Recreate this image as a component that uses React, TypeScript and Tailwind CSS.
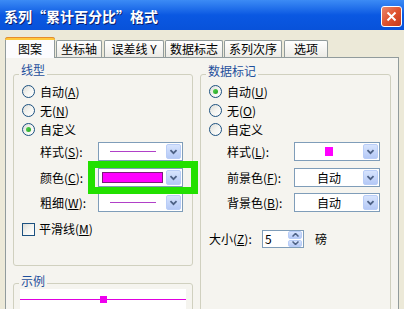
import React from "react";

const Chevron = () => (
  <svg width="15" height="15" viewBox="0 0 15 15">
    <path d="M4 6 L7.5 9.5 L11 6" fill="none" stroke="#4D6185" strokeWidth="2" />
  </svg>
);

const DropBtn = () => (
  <div className="w-[15px] h-[15px] mr-[1px] rounded-[2px] border border-[#B9CDF7] bg-gradient-to-b from-[#D7E4FD] to-[#B5C9F6] flex items-center justify-center">
    <Chevron />
  </div>
);

const Combo = ({ w, children, h = 19 }: { w: number; h?: number; children?: React.ReactNode }) => (
  <div
    className="border border-[#7F9DB9] bg-white flex items-center"
    style={{ width: w, height: h }}
  >
    <div className="flex-1 flex items-center justify-center h-full">{children}</div>
    <DropBtn />
  </div>
);

const Radio = ({ checked }: { checked?: boolean }) => (
  <div className="w-[13px] h-[13px] rounded-full border border-[#1C5180] bg-gradient-to-br from-[#DCDCD7] via-[#F4F4F0] to-white flex items-center justify-center shrink-0">
    {checked && <div className="w-[5px] h-[5px] rounded-full bg-gradient-to-br from-[#55D551] to-[#21A121]" />}
  </div>
);

const RadioRow = ({ checked, label, k }: { checked?: boolean; label: string; k?: string }) => (
  <div className="h-[19px] flex items-center gap-[5px]">
    <Radio checked={checked} />
    <span>
      {label}
      {k && (
        <>
          (<u>{k}</u>)
        </>
      )}
    </span>
  </div>
);

const Label = ({ text, k, w }: { text: string; k: string; w: number }) => (
  <span className="shrink-0" style={{ width: w }}>
    {text}(<u>{k}</u>):
  </span>
);

const Group = ({
  title,
  className,
  children,
  top = 11,
}: {
  title: string;
  className: string;
  children?: React.ReactNode;
  top?: number;
}) => (
  <div className={"relative shrink-0 border border-[#D0D0BF] rounded-[3px] " + className}>
    <span
      className="absolute left-[5px] px-[2px] bg-[#F5F4EF] text-[#1F4F9C] leading-[14px]"
      style={{ top: -top }}
    >
      {title}
    </span>
    {children}
  </div>
);

const Tab = ({ label, w, ml, active }: { label: string; w: number; ml: number; active?: boolean }) =>
  active ? (
    <div
      className="relative z-10 h-[21px] mb-[-1px] border border-b-0 border-[#919B9C] rounded-t-[3px] bg-[#FCFCFE] flex items-center justify-center"
      style={{ width: w, marginLeft: ml }}
    >
      <div className="absolute -top-px -left-px -right-px h-[3px] rounded-t-[3px] bg-[#FFC83C] border-t border-[#E68B2C]" />
      <span className="mt-[1px]">{label}</span>
    </div>
  ) : (
    <div
      className="h-[17px] border border-b-0 border-[#919B9C] rounded-t-[2px] bg-gradient-to-b from-white to-[#ECEBE6] flex items-center justify-center"
      style={{ width: w, marginLeft: ml }}
    >
      {label}
    </div>
  );

export default function App() {
  return (
    <div className="w-[404px] h-[309px] bg-[#ECE9D8] overflow-hidden text-[12px] leading-[14px] text-black font-['Noto_Sans_CJK_SC','Noto_Sans',sans-serif]">
      {/* title bar */}
      <div className="h-[30px] bg-gradient-to-b from-[#3C8BF5] via-[#0A58E2] to-[#0852DA] flex items-center pl-[4px] pr-[2px]">
        <span className="text-white font-bold text-[14px] leading-[16px] [text-shadow:1px_1px_0_#0A1F6E] mt-[2px]">
          系列“累计百分比”格式
        </span>
        <div className="ml-auto w-[21px] h-[21px] rounded-[3px] border border-white bg-gradient-to-br from-[#E9866A] via-[#E0532E] to-[#C4391C] flex items-center justify-center mt-[2px]">
          <svg width="13" height="13" viewBox="0 0 13 13">
            <path d="M2.5 2.5 L10.5 10.5 M10.5 2.5 L2.5 10.5" stroke="white" strokeWidth="2" />
          </svg>
        </div>
      </div>

      {/* tabs */}
      <div className="h-[27px] flex items-end pl-[5px]">
        <Tab label="图案" w={50} ml={0} active />
        <Tab label="坐标轴" w={46} ml={1} />
        <Tab label="误差线 Y" w={60} ml={2} />
        <Tab label="数据标志" w={58} ml={1} />
        <Tab label="系列次序" w={58} ml={1} />
        <Tab label="选项" w={44} ml={2} />
      </div>

      {/* panel */}
      <div className="ml-[5px] w-[394px] h-[260px] border border-[#919B9C] bg-[#F5F4EF] flex pl-[7px]">
        {/* left column */}
        <div className="w-[180px] flex flex-col">
          <Group title="线型" className="mt-[16px] h-[192px] pl-[8px] pt-[7px]" top={12}>
            <RadioRow label="自动" k="A" />
            <RadioRow label="无" k="N" />
            <RadioRow label="自定义" checked />
            <div className="pl-[18px] flex flex-col">
              <div className="mt-[3px] h-[19px] flex items-center">
                <Label text="样式" k="S" w={58} />
                <Combo w={85}>
                  <div className="w-[46px] h-px bg-[#B040C8]" />
                </Combo>
              </div>
              <div className="relative mt-[7px] h-[19px] flex items-center">
                <Label text="颜色" k="C" w={58} />
                <Combo w={85}>
                  <div className="w-full h-full flex items-center pl-[3px]">
                    <div className="w-[61px] h-[11px] bg-[#FF00FF] border border-[#7A1A7A]" />
                  </div>
                </Combo>
                <div className="absolute left-[48px] -top-[7px] w-[110px] h-[33px] border-[7px] border-[#22E000]" />
              </div>
              <div className="mt-[6px] h-[19px] flex items-center">
                <Label text="粗细" k="W" w={58} />
                <Combo w={85}>
                  <div className="w-[46px] h-px bg-[#B040C8]" />
                </Combo>
              </div>
            </div>
            <div className="mt-[10px] h-[14px] flex items-center gap-[4px]">
              <div className="w-[13px] h-[13px] border border-[#1C5180] bg-gradient-to-br from-[#DCDCD7] via-[#F4F4F0] to-white" />
              <span>
                平滑线(<u>M</u>)
              </span>
            </div>
          </Group>
          <Group title="示例" className="mt-[17px] h-[60px] px-[6px] pt-[5px]" top={10}>
            <div className="h-[40px] bg-white relative flex items-start">
              <div className="mt-[10px] w-full h-px bg-[#E000E0]" />
              <div className="absolute left-[80px] top-[7px] w-[7px] h-[7px] bg-[#EE00EE]" />
            </div>
          </Group>
        </div>

        {/* right column */}
        <div className="ml-[7px] w-[191px] flex flex-col">
          <Group title="数据标记" className="mt-[16px] h-[240px] pl-[8px] pt-[7px]" top={11}>
            <RadioRow label="自动" k="U" checked />
            <RadioRow label="无" k="O" />
            <RadioRow label="自定义" />
            <div className="pl-[18px] flex flex-col">
              <div className="mt-[3px] h-[19px] flex items-center">
                <Label text="样式" k="L" w={67} />
                <Combo w={86}>
                  <div className="w-[8px] h-[9px] bg-[#FF00FF]" />
                </Combo>
              </div>
              <div className="mt-[7px] h-[19px] flex items-center">
                <Label text="前景色" k="F" w={67} />
                <Combo w={86}>自动</Combo>
              </div>
              <div className="mt-[6px] h-[19px] flex items-center">
                <Label text="背景色" k="B" w={67} />
                <Combo w={86}>自动</Combo>
              </div>
            </div>
            <div className="mt-[18px] h-[18px] flex items-center">
              <Label text="大小" k="Z" w={53} />
              <div className="w-[42px] h-[18px] border border-[#7F9DB9] bg-white flex items-center">
                <span className="flex-1 pl-[2px]">5</span>
                <div className="w-[14px] h-[16px] mr-px flex flex-col gap-px">
                  <div className="flex-1 rounded-[2px] border border-[#B9CDF7] bg-gradient-to-b from-[#D7E4FD] to-[#B5C9F6] flex items-center justify-center">
                    <svg width="7" height="4" viewBox="0 0 7 4">
                      <path d="M0.5 3.5 L3.5 0.5 L6.5 3.5" fill="none" stroke="#4D6185" strokeWidth="1.5" />
                    </svg>
                  </div>
                  <div className="flex-1 rounded-[2px] border border-[#B9CDF7] bg-gradient-to-b from-[#D7E4FD] to-[#B5C9F6] flex items-center justify-center">
                    <svg width="7" height="4" viewBox="0 0 7 4">
                      <path d="M0.5 0.5 L3.5 3.5 L6.5 0.5" fill="none" stroke="#4D6185" strokeWidth="1.5" />
                    </svg>
                  </div>
                </div>
              </div>
              <span className="ml-[11px]">磅</span>
            </div>
          </Group>
        </div>
      </div>
    </div>
  );
}
